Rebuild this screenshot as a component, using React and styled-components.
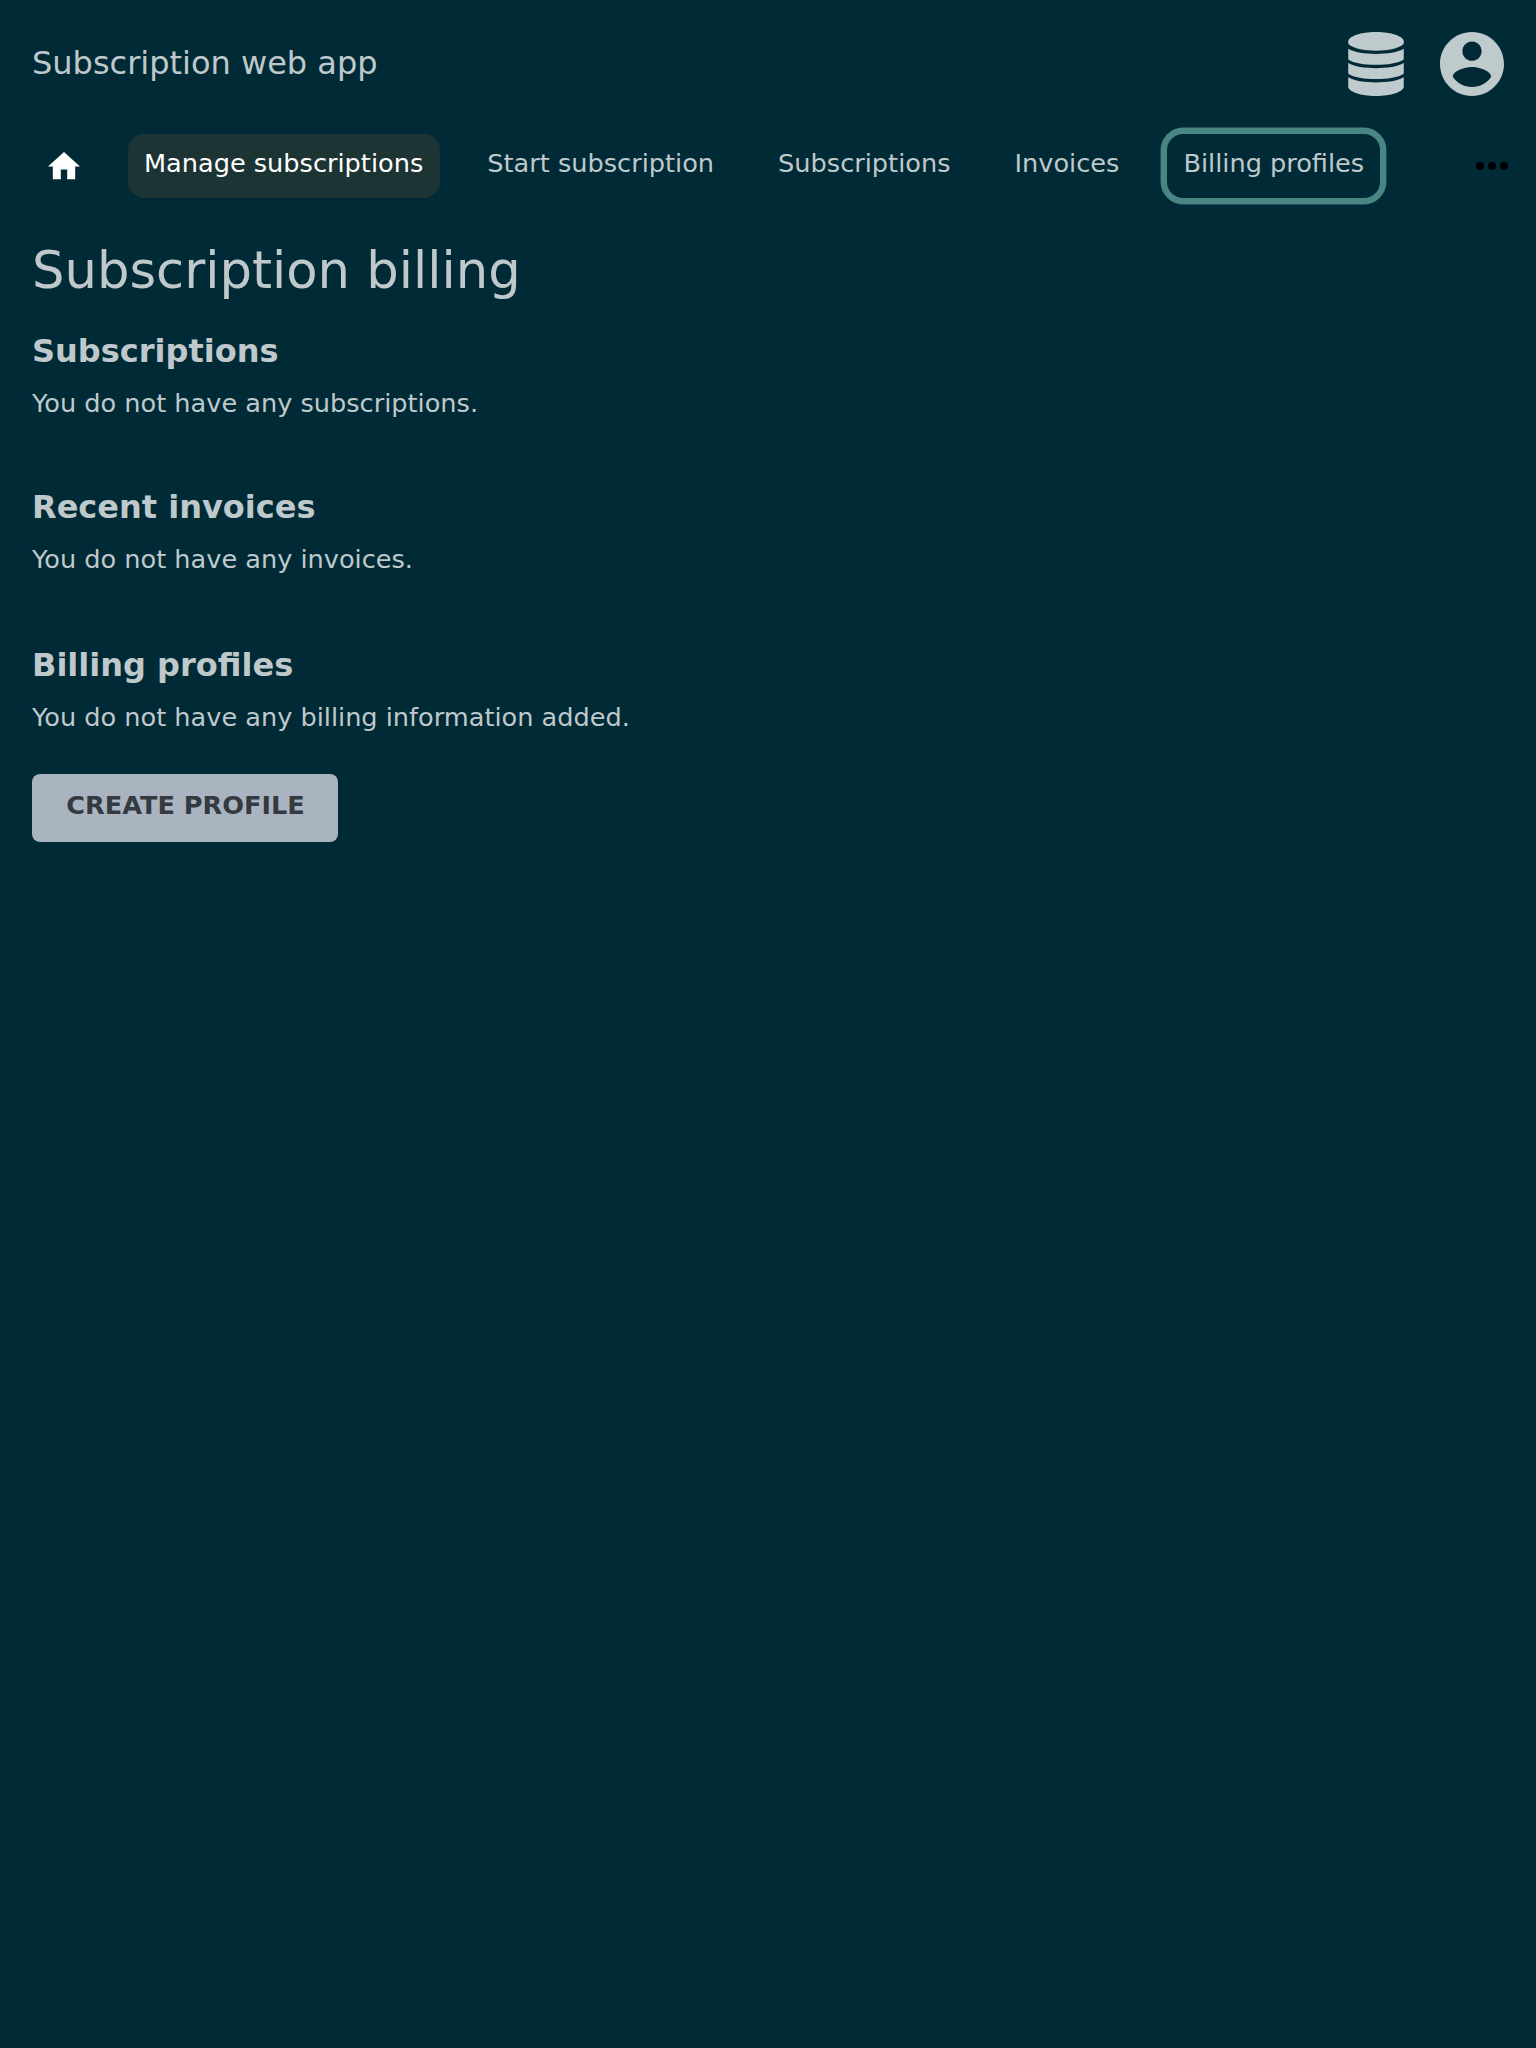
import React from "react";
import styled, { createGlobalStyle } from "styled-components";

const GlobalStyle = createGlobalStyle`
  * { box-sizing: border-box; }
  body {
    margin: 0;
    background: #002b36;
    color: #bfc8cb;
    font-family: "DejaVu Sans", sans-serif;
    font-size: 25.6px;
  }
`;

const Page = styled.div`
  display: flex;
  flex-direction: column;
  min-height: 2048px;
  background: #002b36;
`;

const Header = styled.header`
  display: flex;
  align-items: center;
  justify-content: space-between;
  height: 128px;
  padding: 0 32px;
`;

const AppTitle = styled.div`
  font-size: 32px;
  line-height: 40px;
  padding-bottom: 2px;
`;

const HeaderIcons = styled.div`
  display: flex;
  align-items: center;
  gap: 36px;
  color: #bfcacd;
`;

const Icon = styled.svg`
  display: block;
  flex: none;
  width: ${(p) => p.$w}px;
  height: ${(p) => p.$h}px;
  fill: currentColor;
`;

const Nav = styled.nav`
  display: flex;
  align-items: center;
  gap: 31.67px;
  height: 64px;
  margin-top: 6px;
  padding: 0 20px 0 32px;
`;

const HomeLink = styled.a`
  display: flex;
  align-items: center;
  justify-content: center;
  width: 64.33px;
  height: 64px;
  color: #fff;
`;

const NavLink = styled.a`
  height: 64px;
  padding: 0 ${(p) => (p.$focused ? 16 : 16.4)}px 0 16px;
  border-radius: 16px;
  line-height: 58px;
  white-space: nowrap;
  color: ${(p) => (p.$active ? "#fff" : "inherit")};
  background: ${(p) => (p.$active ? "#1d3434" : "transparent")};
  box-shadow: ${(p) => (p.$focused ? "0 0 0 6.4px #498583" : "none")};
`;

const MoreButton = styled.button`
  display: flex;
  margin-left: auto;
  padding: 0;
  border: 0;
  background: none;
  color: #000;
`;

const Main = styled.main`
  display: flex;
  flex-direction: column;
  align-items: flex-start;
  padding: 42px 32px;
`;

const PageTitle = styled.h1`
  margin: 0 0 31px;
  font-size: 51.2px;
  font-weight: 400;
  line-height: 60px;
`;

const Section = styled.section`
  display: flex;
  flex-direction: column;
  align-items: flex-start;
  gap: 16px;
  margin-bottom: ${(p) => p.$after}px;
`;

const SectionTitle = styled.h2`
  margin: 0;
  font-size: 32px;
  font-weight: 700;
  line-height: 40px;
`;

const Message = styled.p`
  margin: 0;
  line-height: 32px;
`;

const CreateButton = styled.button`
  width: 306px;
  height: 68px;
  padding: 0 0 6px 1px;
  border: 0;
  border-radius: 8px;
  background: #aab4c0;
  color: #343a40;
  font: 700 25.6px "DejaVu Sans", sans-serif;
  text-transform: uppercase;
  white-space: nowrap;
`;

const links = [
  { label: "Manage subscriptions", active: true },
  { label: "Start subscription" },
  { label: "Subscriptions" },
  { label: "Invoices" },
  { label: "Billing profiles", focused: true },
];

const sections = [
  { title: "Subscriptions", message: "You do not have any subscriptions.", after: 68 },
  { title: "Recent invoices", message: "You do not have any invoices.", after: 70 },
  { title: "Billing profiles", message: "You do not have any billing information added.", after: 41 },
];

export default function App() {
  return (
    <Page>
      <GlobalStyle />
      <Header>
        <AppTitle>Subscription web app</AppTitle>
        <HeaderIcons>
          <Icon $w={56} $h={64} viewBox="0 0 448 512">
            <path d="M2 76C2 34 101 0 224 0s222 34 222 76v18c-34 38-126 55-222 55S36 132 2 94z" />
            <path d="M2 134c46 28 134 41 222 41s176-13 222-41v85c-42 30-130 43-222 43S44 249 2 219z" />
            <path d="M2 248c46 28 134 41 222 41s176-13 222-41v85c-42 30-130 43-222 43S44 363 2 333z" />
            <path d="M2 362c46 28 134 41 222 41s176-13 222-41v74c0 42-99 76-222 76S2 478 2 436z" />
          </Icon>
          <Icon $w={64} $h={64} viewBox="2 2 20 20">
            <path d="M12 2C6.48 2 2 6.48 2 12s4.48 10 10 10 10-4.48 10-10S17.52 2 12 2zm0 3c1.66 0 3 1.34 3 3s-1.34 3-3 3-3-1.34-3-3 1.34-3 3-3zm0 14.2c-2.5 0-4.71-1.28-6-3.22.03-1.99 4-3.08 6-3.08 1.99 0 5.97 1.09 6 3.08-1.29 1.94-3.5 3.22-6 3.22z" />
          </Icon>
        </HeaderIcons>
      </Header>
      <Nav>
        <HomeLink>
          <Icon $w={32} $h={27.2} viewBox="2 3 20 17">
            <path d="M10 20v-6h4v6h5v-8h3L12 3 2 12h3v8z" />
          </Icon>
        </HomeLink>
        {links.map((l) => (
          <NavLink key={l.label} $active={l.active} $focused={l.focused}>
            {l.label}
          </NavLink>
        ))}
        <MoreButton aria-label="More">
          <Icon $w={48} $h={48} viewBox="0 0 24 24">
            <circle cx="6" cy="12" r="2" />
            <circle cx="12" cy="12" r="2" />
            <circle cx="18" cy="12" r="2" />
          </Icon>
        </MoreButton>
      </Nav>
      <Main>
        <PageTitle>Subscription billing</PageTitle>
        {sections.map((s) => (
          <Section key={s.title} $after={s.after}>
            <SectionTitle>{s.title}</SectionTitle>
            <Message>{s.message}</Message>
          </Section>
        ))}
        <CreateButton>Create profile</CreateButton>
      </Main>
    </Page>
  );
}
